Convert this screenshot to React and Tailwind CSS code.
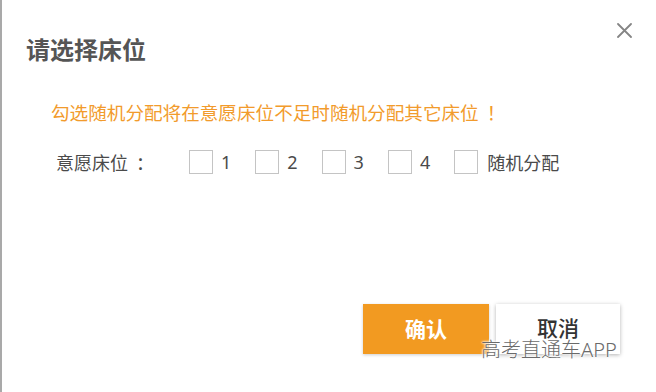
import React from "react";

const CJK = { fontFamily: '"Noto Sans CJK SC", "Noto Sans", sans-serif' };
const MIX = { fontFamily: '"Noto Sans", "Noto Sans CJK SC", sans-serif' };

function Box() {
  return <span className="block w-[24px] h-[24px] border border-[#c4c4c4] bg-white shrink-0" />;
}

export default function App() {
  const nums = ["1", "2", "3", "4"];
  return (
    <div className="relative w-[656px] h-[392px] bg-white border-l-2 border-[#a9a9a9] flex flex-col pt-[23px] overflow-hidden" style={CJK}>
      <div className="flex justify-between items-start pl-[24px] pr-[24px]">
        <h1 className="mt-[14px] text-[24px] leading-none font-bold text-[#555555]">请选择床位</h1>
        <svg width="15" height="15" viewBox="0 0 15 15">
          <path d="M1 1 L14 14 M14 1 L1 14" stroke="#858585" strokeWidth="1.8" strokeLinecap="round" />
        </svg>
      </div>

      <div className="pl-[49px]">
        <p className="mt-[42px] text-[18.6px] leading-none text-[#f29b2c] whitespace-nowrap">
          勾选随机分配将在意愿床位不足时随机分配其它床位<span className="ml-[8px]">！</span>
        </p>
        <div className="mt-[28px] flex items-center pl-[5px] text-[18px] leading-none text-[#4a4a4a]">
          <span className="w-[133px]">
            意愿床位<span className="ml-[8px]">：</span>
          </span>
          {nums.map((n) => (
            <label key={n} className="w-[66.3px] flex items-center gap-[8px]">
              <Box />
              <span style={MIX}>{n}</span>
            </label>
          ))}
          <label className="flex items-center gap-[9px]">
            <Box />
            <span>随机分配</span>
          </label>
        </div>
      </div>

      <div className="mt-auto pb-[38px] pr-[36px] flex justify-end gap-[7px]">
        <button className="w-[126px] h-[50px] pb-[2px] bg-[#f29a21] text-white text-[21px] leading-none font-bold shadow-[0_1px_3px_rgba(0,0,0,0.2)]">确认</button>
        <button className="w-[124px] h-[50px] pb-[4px] bg-white text-[#333333] text-[21px] leading-none font-medium shadow-[0_1px_4px_rgba(0,0,0,0.3)]">取消</button>
      </div>

      <div
        className="absolute left-[479px] top-[340px] text-[20px] leading-none font-light text-[#6a6a6a] whitespace-nowrap"
        style={{ ...MIX, textShadow: "0 0 2px #fff, 0 0 2px #fff, 0 0 3px #fff" }}
      >
        高考直通车APP
      </div>
    </div>
  );
}
